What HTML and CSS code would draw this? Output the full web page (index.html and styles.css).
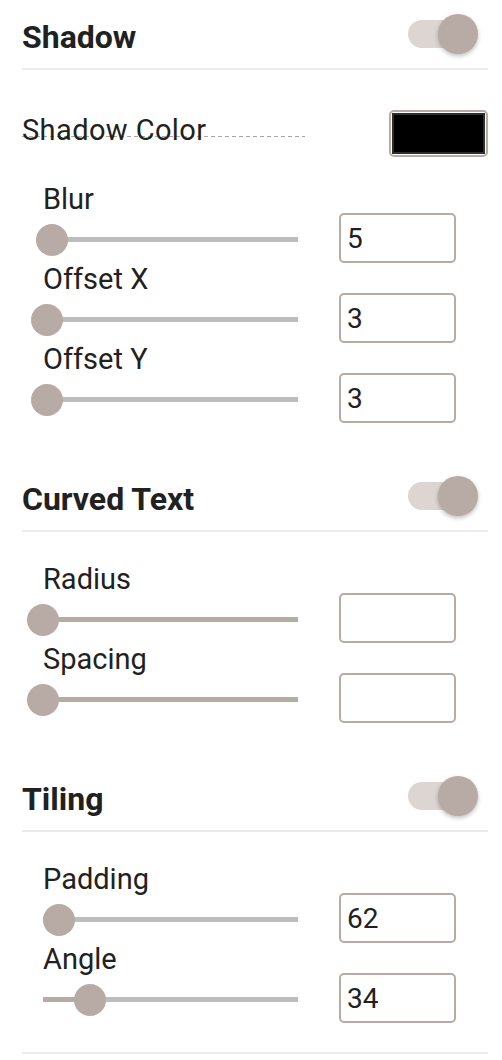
FILE: index.html
```html
<!DOCTYPE html>
<html lang="en">
  <head>
    <meta charset="UTF-8" />
    <meta name="viewport" content="width=device-width, initial-scale=1.0" />
    <title>Text Effects</title>
    <link rel="stylesheet" href="styles.css">
  </head>
  <body>
    <div class="panel">
      <section class="group">
        <div class="group-head">
          <h2>Shadow</h2>
          <span class="toggle on"><span class="toggle-knob"></span></span>
        </div>

        <div class="color-row">
          <span class="color-label">Shadow Color</span>
          <span class="swatch"><span class="swatch-fill"></span></span>
        </div>

        <div class="field">
          <label>Blur</label>
          <div class="field-controls">
            <div class="slider">
              <div class="slider-track"><div class="slider-fill" style="width: 3.5%"></div></div>
              <div class="slider-thumb" style="left: 3.5%"></div>
            </div>
            <input class="num" type="text" value="5" />
          </div>
        </div>

        <div class="field">
          <label>Offset X</label>
          <div class="field-controls">
            <div class="slider">
              <div class="slider-track"><div class="slider-fill" style="width: 1.6%"></div></div>
              <div class="slider-thumb" style="left: 1.6%"></div>
            </div>
            <input class="num" type="text" value="3" />
          </div>
        </div>

        <div class="field">
          <label>Offset Y</label>
          <div class="field-controls">
            <div class="slider">
              <div class="slider-track"><div class="slider-fill" style="width: 1.6%"></div></div>
              <div class="slider-thumb" style="left: 1.6%"></div>
            </div>
            <input class="num" type="text" value="3" />
          </div>
        </div>
      </section>

      <section class="group">
        <div class="group-head">
          <h2>Curved Text</h2>
          <span class="toggle on"><span class="toggle-knob"></span></span>
        </div>

        <div class="field">
          <label>Radius</label>
          <div class="field-controls">
            <div class="slider">
              <div class="slider-track tinted"></div>
              <div class="slider-thumb" style="left: 0%"></div>
            </div>
            <input class="num" type="text" value="" />
          </div>
        </div>

        <div class="field">
          <label>Spacing</label>
          <div class="field-controls">
            <div class="slider">
              <div class="slider-track tinted"></div>
              <div class="slider-thumb" style="left: 0%"></div>
            </div>
            <input class="num" type="text" value="" />
          </div>
        </div>
      </section>

      <section class="group">
        <div class="group-head">
          <h2>Tiling</h2>
          <span class="toggle on"><span class="toggle-knob"></span></span>
        </div>

        <div class="field">
          <label>Padding</label>
          <div class="field-controls">
            <div class="slider">
              <div class="slider-track"><div class="slider-fill" style="width: 6.2%"></div></div>
              <div class="slider-thumb" style="left: 6.2%"></div>
            </div>
            <input class="num" type="text" value="62" />
          </div>
        </div>

        <div class="field">
          <label>Angle</label>
          <div class="field-controls">
            <div class="slider">
              <div class="slider-track"><div class="slider-fill" style="width: 18.6%"></div></div>
              <div class="slider-thumb" style="left: 18.6%"></div>
            </div>
            <input class="num" type="text" value="34" />
          </div>
        </div>
      </section>

      <div class="panel-end"></div>
    </div>
  </body>
</html>
```

FILE: styles.css
```css
body {
  font-family: Roboto, "Noto Sans", Arial, sans-serif;
  background-color: #ffffff;
  color: #212121;
  margin: 0;
  padding: 0 14px 0 22px;
}
.panel {
  width: 466px;
}
.group {
  margin-bottom: 39px;
}
.group:last-of-type {
  margin-bottom: 29px;
}
.group-head {
  height: 68px;
  display: flex;
  align-items: center;
  justify-content: space-between;
  border-bottom: 2px solid #ebebeb;
}
.group-head h2 {
  margin: 0;
  padding-top: 6px;
  font-size: 32px;
  font-weight: 700;
}
.toggle {
  position: relative;
  width: 68px;
  height: 28px;
  border-radius: 14px;
  background-color: #dcd5d2;
  margin-right: 12px;
}
.toggle-knob {
  position: absolute;
  top: -6px;
  right: -2px;
  width: 40px;
  height: 40px;
  border-radius: 50%;
  background-color: #b8aaa5;
  box-shadow: 0 2px 4px rgba(0, 0, 0, 0.25);
}
.color-row {
  display: flex;
  align-items: center;
  justify-content: space-between;
  margin-top: 40px;
  margin-bottom: 28px;
}
.color-label {
  width: 283px;
  font-size: 29px;
  letter-spacing: 0.4px;
  line-height: 12px;
  padding-bottom: 1px;
  margin-bottom: 6px;
  background-image: linear-gradient(to right, #a8a8a8 55%, transparent 55%);
  background-size: 7px 1px;
  background-repeat: repeat-x;
  background-position: left bottom;
}
.swatch {
  width: 93px;
  height: 41px;
  border: 2px solid #b8aaa5;
  border-radius: 5px;
  padding: 1px;
  box-sizing: content-box;
  display: flex;
}
.swatch-fill {
  flex: 1;
  background-color: #000;
  border: 2px solid #2e2e2e;
}
.field {
  padding-left: 21px;
  margin-bottom: 2px;
}
.field label {
  display: block;
  font-size: 29px;
  line-height: 28px;
}
.group-head + .field {
  margin-top: 33px;
}
.field-controls {
  display: flex;
  align-items: center;
  gap: 41px;
}
.slider {
  position: relative;
  width: 255px;
  height: 32px;
  margin-top: 3px;
  display: flex;
  align-items: center;
}
.slider-track {
  position: relative;
  width: 100%;
  height: 5px;
  background-color: #bdbdbd;
}
.slider-track.tinted {
  background-color: #b8aaa5;
}
.slider-fill {
  height: 100%;
  background-color: #b8aaa5;
}
.slider-thumb {
  position: absolute;
  top: 0;
  width: 32px;
  height: 32px;
  margin-left: -16px;
  border-radius: 50%;
  background-color: #b8aaa5;
}
.num {
  width: 117px;
  height: 50px;
  box-sizing: border-box;
  border: 2px solid #b8aaa5;
  border-radius: 5px;
  padding: 0 6px;
  font-family: Roboto, "Noto Sans", Arial, sans-serif;
  font-size: 28px;
  color: #212121;
  background: #fff;
  outline: none;
}
.panel-end {
  border-bottom: 2px solid #ebebeb;
}
```
